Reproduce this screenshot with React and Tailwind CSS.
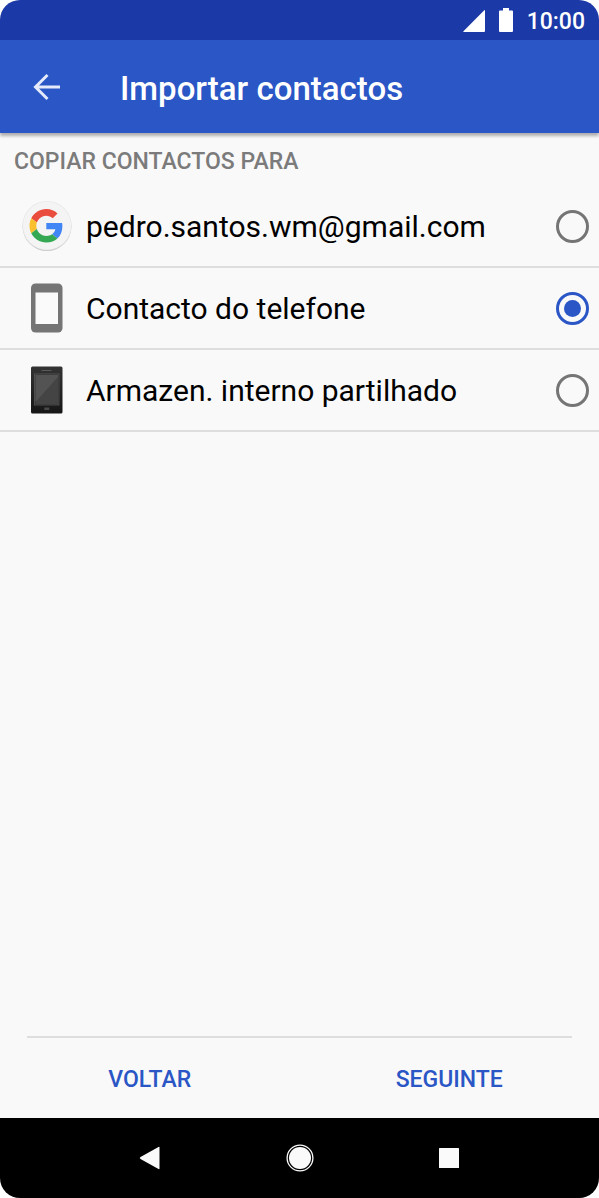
import React, { useState } from 'react';

const GoogleIcon = () => (
  <svg viewBox="0 0 50 50" className="h-[50px] w-[50px]" aria-hidden="true">
    <circle cx="25" cy="25.6" r="24.4" fill="#c9c9c9" />
    <circle cx="25" cy="24.6" r="24.6" fill="#e6e6e6" />
    <circle cx="25" cy="24.6" r="24" fill="#f4f4f4" />
    <g transform="translate(7.5 8) scale(0.7)">
      <path fill="#ea4c3d" d="M24 9.5c3.54 0 6.71 1.22 9.21 3.6l6.85-6.85C35.9 2.38 30.47 0 24 0 14.62 0 6.51 5.38 2.56 13.22l7.98 6.19C12.43 13.72 17.74 9.5 24 9.5z" />
      <path fill="#4285f4" d="M46.98 24.55c0-1.57-.15-3.09-.38-4.55H24v9.02h12.94c-.58 2.96-2.26 5.48-4.78 7.18l7.73 6c4.51-4.18 7.09-10.36 7.09-17.65z" />
      <path fill="#fbc02d" d="M10.53 28.59c-.48-1.45-.76-2.99-.76-4.59s.27-3.14.76-4.59l-7.98-6.19C.92 16.46 0 20.12 0 24c0 3.88.92 7.54 2.56 10.78l7.97-6.19z" />
      <path fill="#34a853" d="M24 48c6.48 0 11.93-2.13 15.89-5.81l-7.73-6c-2.15 1.45-4.92 2.3-8.16 2.3-6.26 0-11.57-4.22-13.47-9.91l-7.98 6.19C6.51 42.62 14.62 48 24 48z" />
    </g>
  </svg>
);

const PhoneIcon = () => (
  <svg viewBox="0 0 50 50" className="h-[50px] w-[50px]" aria-hidden="true">
    <rect x="9" y="0.5" width="31.5" height="49" rx="4.5" fill="#757575" />
    <rect x="13.5" y="9.5" width="22.5" height="31.5" fill="#fafafa" />
  </svg>
);

const StorageIcon = () => (
  <svg viewBox="0 0 50 50" className="h-[50px] w-[50px]" aria-hidden="true">
    <defs>
      <linearGradient id="body" x1="0" y1="0" x2="0" y2="1">
        <stop offset="0" stopColor="#333" />
        <stop offset="1" stopColor="#161616" />
      </linearGradient>
    </defs>
    <rect x="9" y="1.5" width="31.5" height="47" rx="1.5" fill="url(#body)" />
    <rect x="12.5" y="9" width="24.5" height="31" fill="#2c2c2c" stroke="#606060" strokeWidth="0.7" />
    <rect x="13.5" y="10" width="22.5" height="29" fill="#444" />
    <path d="M13.5 10H36v2L13.5 37z" fill="#535353" />
    <path d="M19.5 5.5h10" stroke="#595959" strokeWidth="1" />
    <rect x="22.3" y="42.5" width="5" height="2.5" fill="#484848" />
  </svg>
);

const accounts = [
  { id: 'google', label: 'pedro.santos.wm@gmail.com', Icon: GoogleIcon },
  { id: 'phone', label: 'Contacto do telefone', Icon: PhoneIcon },
  { id: 'storage', label: 'Armazen. interno partilhado', Icon: StorageIcon },
];

const StatusBar = () => (
  <div className="flex h-10 items-center justify-end bg-[#1c39a8] pr-3.5 text-white">
    <svg viewBox="0 0 22 24" className="mr-3.5 h-6 w-[22px]" aria-hidden="true">
      <path d="M21 2.5q1-1 1 .5v20q0 1-1 1H1.2q-1.5 0-.5-1z" fill="currentColor" />
    </svg>
    <svg viewBox="0 0 14 24" className="mr-3.5 h-6 w-3.5" aria-hidden="true">
      <path d="M4 0h6v2.5h3q1 0 1 1V23q0 1-1 1H1q-1 0-1-1V3.5q0-1 1-1h3z" fill="currentColor" />
    </svg>
    <span className="pt-1 text-[23px] leading-7 font-medium">10:00</span>
  </div>
);

const App = () => {
  const [selected, setSelected] = useState('phone');

  return (
    <div className="min-h-screen bg-white font-['Roboto',sans-serif]">
      <div className="flex min-h-screen flex-col overflow-hidden rounded-[20px] bg-[#f9f9f9]">
        <StatusBar />

        {/* App bar */}
        <header className="flex h-[93px] items-center bg-[#2a56c6] pl-8 text-white shadow-[0_3px_3px_rgba(0,0,0,0.3)]">
          <button type="button" aria-label="Voltar" className="mr-[58px]">
            <svg viewBox="0 0 30 30" className="h-[30px] w-[30px]" aria-hidden="true">
              <path d="M28 15H4M15.5 3 3.5 15l12 12" fill="none" stroke="#e4eafa" strokeWidth="3" />
            </svg>
          </button>
          <h1 className="pt-1 text-[33px] leading-10 font-medium">Importar contactos</h1>
        </header>

        {/* Account list */}
        <main className="flex-1">
          <h2 className="px-3.5 pt-[15px] pb-2.5 text-[23px] leading-7 font-medium text-[#7b7b7b]">
            COPIAR CONTACTOS PARA
          </h2>
          <div role="radiogroup" aria-label="Copiar contactos para">
            {accounts.map(({ id, label, Icon }) => (
              <label
                key={id}
                className="flex h-[82px] cursor-pointer items-center border-b-2 border-[#dedede] pr-2.5 pl-[22px]"
              >
                <Icon />
                <span className="ml-3.5 flex-1 pt-0.5 text-[30px] leading-9 text-black">{label}</span>
                <input
                  type="radio"
                  name="account"
                  value={id}
                  checked={selected === id}
                  onChange={() => setSelected(id)}
                  className="grid h-[33px] w-[33px] shrink-0 appearance-none place-items-center rounded-full border-3 border-[#757575] checked:border-[#2a56c6] checked:before:h-[17px] checked:before:w-[17px] checked:before:rounded-full checked:before:bg-[#2a56c6] checked:before:content-['']"
                />
              </label>
            ))}
          </div>
        </main>

        {/* Wizard buttons */}
        <footer>
          <hr className="mx-[27px] border-t-2 border-[#dedede]" />
          <div className="grid h-20 grid-cols-2 text-[23px] leading-7 font-medium text-[#2a56c6]">
            <button type="button" className="pt-1">VOLTAR</button>
            <button type="button" className="pt-1">SEGUINTE</button>
          </div>
        </footer>

        {/* System navigation */}
        <nav className="grid h-20 grid-cols-3 bg-black px-[12.5%]">
          <button type="button" aria-label="Retroceder" className="grid place-items-center">
            <svg viewBox="0 0 28 28" className="h-7 w-7" aria-hidden="true">
              <path d="M23.500 3.500v21q0 1-1 .5L4.500 15q-1.500-1 0-2L22.500 3q1-.5 1 .5z" fill="#fafafa" />
            </svg>
          </button>
          <button type="button" aria-label="Início" className="grid place-items-center">
            <svg viewBox="0 0 28 28" className="h-7 w-7" aria-hidden="true">
              <circle cx="14" cy="14" r="12.9" fill="none" stroke="#fafafa" strokeWidth="1.3" />
              <circle cx="14" cy="14" r="11" fill="#fafafa" />
            </svg>
          </button>
          <button type="button" aria-label="Recentes" className="grid place-items-center">
            <svg viewBox="0 0 28 28" className="h-7 w-7" aria-hidden="true">
              <rect x="4" y="4" width="20" height="20" rx="0.5" fill="#fafafa" />
            </svg>
          </button>
        </nav>
      </div>
    </div>
  );
};

export default App;
